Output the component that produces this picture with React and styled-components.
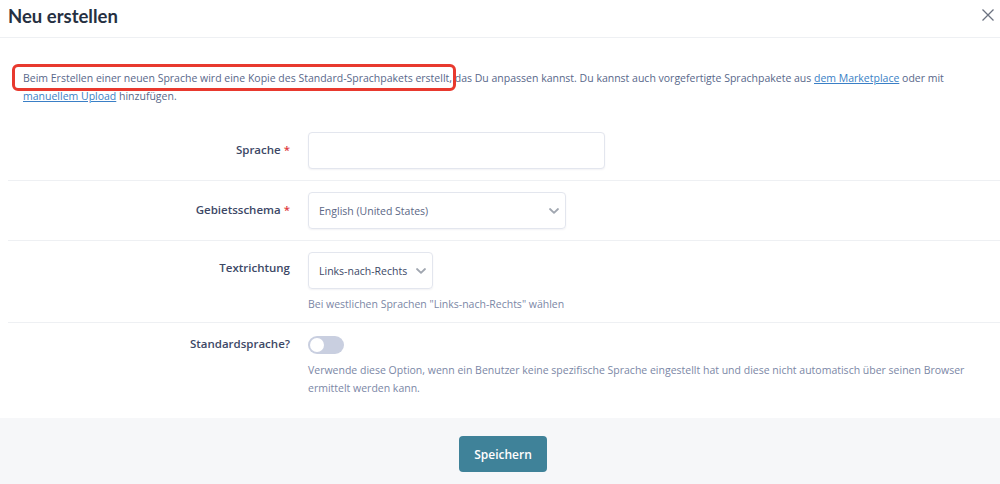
import styled, { createGlobalStyle } from "styled-components";
import { useState } from "react";

const GlobalStyle = createGlobalStyle`
  body {
    margin: 0;
    background: #ffffff;
    font-family: "Open Sans", "Noto Sans", sans-serif;
  }
`;

const Modal = styled.div`
  width: 1000px;
  height: 484px;
  background: #ffffff;
  display: flex;
  flex-direction: column;
  overflow: hidden;
`;

const Header = styled.div`
  display: flex;
  align-items: center;
  justify-content: space-between;
  height: 38px;
  padding: 0 5px 0 8px;
  border-bottom: 1px solid #eef0f3;
  box-sizing: border-box;
`;

const Title = styled.h1`
  margin: 0;
  margin-top: -5px;
  font-family: "Lato", "Open Sans", sans-serif;
  font-size: 18.5px;
  font-weight: 700;
  color: #263042;
`;

const Close = styled.button`
  border: none;
  background: none;
  padding: 0;
  margin-top: -8px;
  cursor: pointer;
  display: flex;
`;

const Body = styled.div`
  flex: 1;
  padding: 0 0 0 8px;
`;

const Intro = styled.p`
  margin: 31px 0 16px 15px;
  font-size: 10.5px;
  line-height: 18px;
  color: #58678a;
  width: 930px;
`;

const Marked = styled.span`
  position: relative;

  &:after {
    content: "";
    position: absolute;
    left: -11px;
    right: -4px;
    top: -7px;
    bottom: -6px;
    border: 3px solid #e8392e;
    border-radius: 6px;
    pointer-events: none;
  }
`;

const Link = styled.a`
  color: #3a7fc6;
  text-decoration: underline;
`;

const Row = styled.div`
  display: grid;
  grid-template-columns: 282px 1fr;
  column-gap: 18px;
  padding: ${(props) => props.pad || "11px 0"};
  border-bottom: ${(props) => (props.last ? "none" : "1px solid #eef0f3")};
`;

const Label = styled.label`
  text-align: right;
  font-size: 11.5px;
  font-weight: 600;
  color: #3d4866;
  padding-top: ${(props) => props.top || "10px"};
`;

const Req = styled.span`
  color: #e0393e;
  margin-left: 3px;
`;

const Field = styled.div`
  display: flex;
  flex-direction: column;
  align-items: flex-start;
`;

const Input = styled.input`
  width: 297px;
  height: 37px;
  box-sizing: border-box;
  border: 1px solid #e3e6ee;
  border-radius: 4px;
  box-shadow: 0 1px 2px rgba(30, 40, 80, 0.06);
  font-family: inherit;
  outline: none;
`;

const SelectBox = styled.div`
  display: flex;
  align-items: center;
  justify-content: space-between;
  width: ${(props) => props.w}px;
  height: 37px;
  box-sizing: border-box;
  padding: 0 5px 0 10px;
  border: 1px solid #e3e6ee;
  border-radius: 4px;
  box-shadow: 0 1px 2px rgba(30, 40, 80, 0.06);
  font-size: 10.5px;
  color: ${(props) => (props.dark ? "#3d4866" : "#5b6785")};
`;

const Help = styled.div`
  margin-top: ${(props) => props.mt || "6px"};
  font-size: 10.5px;
  line-height: 18px;
  color: #7b87a6;
  max-width: ${(props) => props.mw || "none"};
`;

const Toggle = styled.button`
  position: relative;
  width: 36px;
  height: 18px;
  border: none;
  border-radius: 9px;
  background: ${(props) => (props.on ? "#3f8299" : "#c9cfe0")};
  cursor: pointer;
  padding: 0;

  &:after {
    content: "";
    position: absolute;
    top: 2px;
    left: ${(props) => (props.on ? "20px" : "2px")};
    width: 14px;
    height: 14px;
    border-radius: 50%;
    background: #ffffff;
  }
`;

const Footer = styled.div`
  height: 66px;
  box-sizing: border-box;
  padding: 18px 0 0 6px;
  background: #f6f7f9;
  display: flex;
  align-items: flex-start;
  justify-content: center;
`;

const SaveButton = styled.button`
  width: 88px;
  height: 36px;
  border: none;
  border-radius: 4px;
  background: #3f8299;
  color: #ffffff;
  font-family: inherit;
  font-size: 12px;
  font-weight: 600;
  cursor: pointer;
`;

const Chevron = () => (
  <svg width="12" height="8" viewBox="0 0 12 8" fill="none" stroke="#a0a6b0" strokeWidth="1.8" strokeLinecap="round" strokeLinejoin="round">
    <path d="M2 2l4 3.8L10 2" />
  </svg>
);

function App() {
  const [isDefault, setIsDefault] = useState(false);

  return (
    <Modal>
      <GlobalStyle />
      <Header>
        <Title>Neu erstellen</Title>
        <Close aria-label="Schließen">
          <svg width="14" height="14" viewBox="0 0 14 14" stroke="#6b7280" strokeWidth="1.3">
            <path d="M1.5 1.5l11 11M12.5 1.5l-11 11" />
          </svg>
        </Close>
      </Header>
      <Body>
        <Intro>
          <Marked>Beim Erstellen einer neuen Sprache wird eine Kopie des Standard-Sprachpakets erstellt,</Marked> das Du anpassen kannst. Du kannst auch vorgefertigte Sprachpakete aus <Link href="#">dem Marketplace</Link> oder mit <Link href="#">manuellem Upload</Link> hinzufügen.
        </Intro>

        <Row>
          <Label>
            Sprache<Req>*</Req>
          </Label>
          <Field>
            <Input type="text" />
          </Field>
        </Row>

        <Row>
          <Label>
            Gebietsschema<Req>*</Req>
          </Label>
          <Field>
            <SelectBox w={258}>
              English (United States)
              <Chevron />
            </SelectBox>
          </Field>
        </Row>

        <Row pad="11px 0 9px">
          <Label top="8px">Textrichtung</Label>
          <Field>
            <SelectBox w={125} dark>
              Links-nach-Rechts
              <Chevron />
            </SelectBox>
            <Help>Bei westlichen Sprachen "Links-nach-Rechts" wählen</Help>
          </Field>
        </Row>

        <Row pad="13px 0 18px" last>
          <Label top="0px">Standardsprache?</Label>
          <Field>
            <Toggle on={isDefault} onClick={() => setIsDefault(!isDefault)} />
            <Help mt="7px" mw="660px">
              Verwende diese Option, wenn ein Benutzer keine spezifische Sprache eingestellt hat und diese nicht automatisch über seinen Browser ermittelt werden kann.
            </Help>
          </Field>
        </Row>
      </Body>
      <Footer>
        <SaveButton>Speichern</SaveButton>
      </Footer>
    </Modal>
  );
}

export default App;
